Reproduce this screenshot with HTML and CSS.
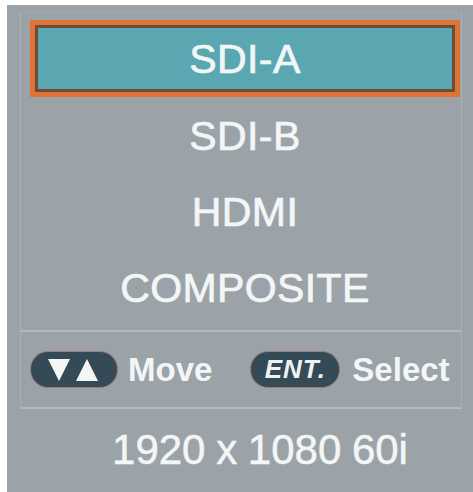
FILE: index.html
```html
<!DOCTYPE html>
<html>
<head>
<meta charset="utf-8">
<link rel="stylesheet" href="styles.css">
</head>
<body>
<div class="panel">
  <div class="menu">
    <div class="item selected"><span>SDI-A</span></div>
    <div class="item"><span>SDI-B</span></div>
    <div class="item"><span>HDMI</span></div>
    <div class="item"><span>COMPOSITE</span></div>
  </div>
  <div class="hints">
    <div class="pill arrows">
      <svg width="52" height="24" viewBox="0 0 52 24">
        <polygon points="0,1 22,1 11,23" fill="#f4f6f6"/>
        <polygon points="28,23 50,23 39,1" fill="#f4f6f6"/>
      </svg>
    </div>
    <span class="hint-label move">Move</span>
    <div class="pill ent"><span>ENT.</span></div>
    <span class="hint-label select">Select</span>
  </div>
  <div class="resolution">1920 x 1080 60i</div>
</div>
</body>
</html>
```

FILE: styles.css
```css
html, body {
  margin: 0;
  padding: 0;
  background: #ffffff;
}
body {
  width: 473px;
  height: 492px;
  overflow: hidden;
  font-family: "Liberation Sans", Arial, sans-serif;
}
.panel {
  margin: 5px 0 0 7px;
  height: 487px;
  background: #9ca3a8;
  padding: 7px 11px 0 13px;
  box-sizing: border-box;
  display: flex;
  flex-direction: column;
}
.menu {
  border: 1px solid #aab1b5;
  border-bottom: 2px solid #b3babd;
  border-top-color: #a2a9ae;
  height: 320px;
  box-sizing: border-box;
  padding: 7px 1px 0 9px;
  display: flex;
  flex-direction: column;
}
.item {
  height: 76px;
  display: flex;
  align-items: center;
  justify-content: center;
  color: #f3f6f6;
  font-size: 41px;
  letter-spacing: 0.4px;
  -webkit-text-stroke: 0.7px #f3f6f6;
  flex: none;
}
.item span {
  position: relative;
  top: 1px;
}
.item.selected {
  height: 77px;
  box-sizing: border-box;
  border: 5px solid #df7436;
  background: #5aa7b2;
  box-shadow: inset 0 0 0 3px #6d4b36;
}
.hints {
  height: 77px;
  border: 1px solid #aab1b5;
  border-top: none;
  border-bottom: 2px solid #b3babd;
  box-sizing: border-box;
  display: flex;
  align-items: center;
  padding: 0 0 0 9px;
}
.pill {
  height: 37px;
  box-sizing: border-box;
  background: #344a56;
  border: 1px solid #9c7f80;
  border-radius: 18px;
  display: flex;
  align-items: center;
  justify-content: center;
  flex: none;
}
.pill.arrows {
  width: 88px;
}
.pill.ent {
  width: 90px;
  margin-left: 38px;
}
.pill.ent span {
  color: #eef2f3;
  font-weight: bold;
  font-style: italic;
  font-size: 26px;
  letter-spacing: 1px;
}
.hint-label {
  color: #f3f6f6;
  font-weight: bold;
  font-size: 33px;
}
.hint-label.move {
  margin-left: 10px;
}
.hint-label.select {
  margin-left: 12px;
}
.resolution {
  flex: 1;
  display: flex;
  align-items: center;
  justify-content: center;
  color: #f3f6f6;
  font-size: 42px;
  word-spacing: -1px;
  -webkit-text-stroke: 0.5px #f3f6f6;
  padding-left: 38px;
  padding-bottom: 2px;
}
```
